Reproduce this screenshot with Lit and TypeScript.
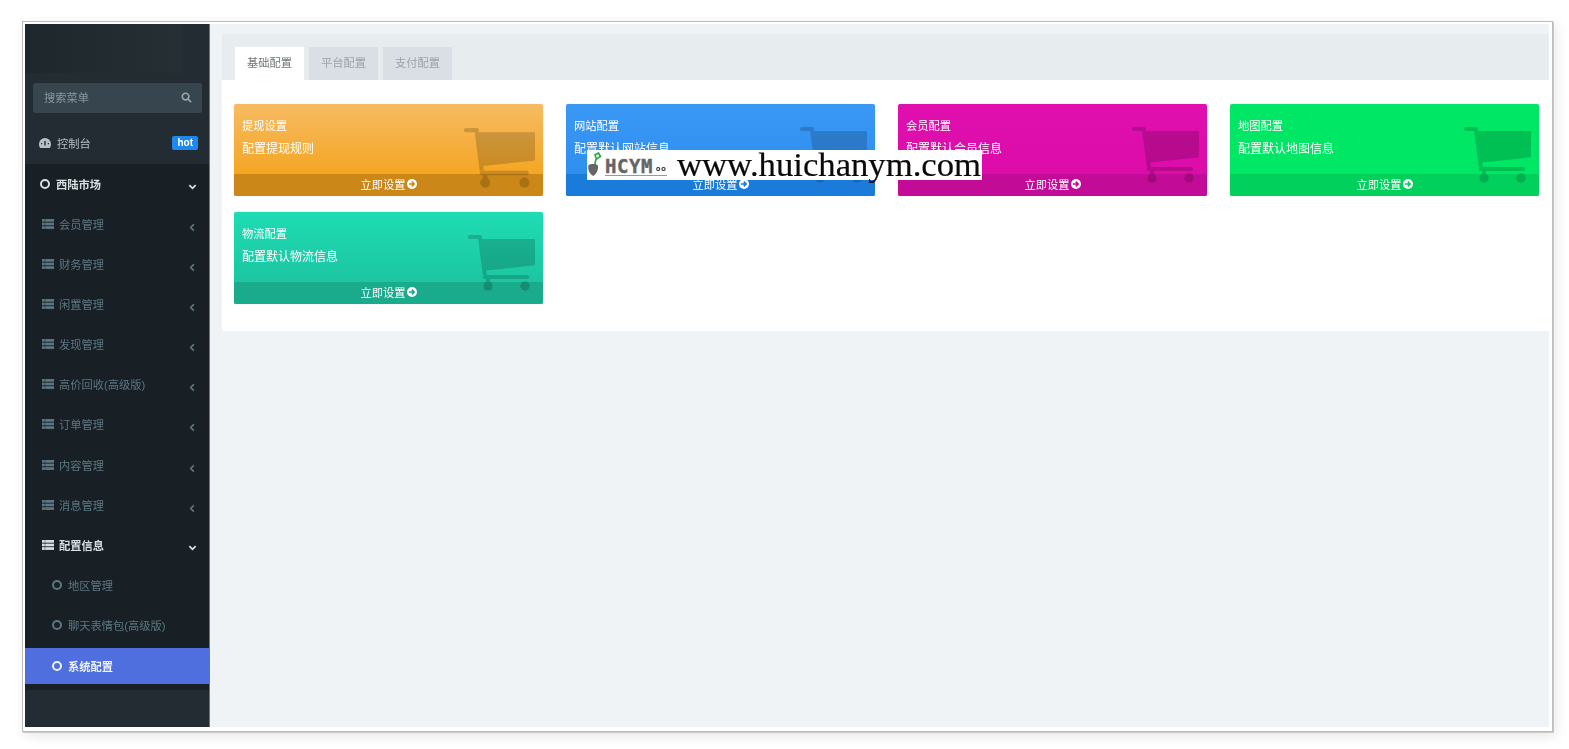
import { LitElement, css, html, svg } from "lit";
import { customElement } from "lit/decorators.js";

type Card = { title: string; desc: string; top: string; bottom: string; foot: string; big?: boolean };

const CARDS: Card[] = [
  { title: "提现设置", desc: "配置提现规则", top: "#f6bb62", bottom: "#f5a623", foot: "#cb8819", big: true },
  { title: "网站配置", desc: "配置默认网站信息", top: "#3a98f5", bottom: "#2f8fef", foot: "#1a7bdb" },
  { title: "会员配置", desc: "配置默认会员信息", top: "#df10ae", bottom: "#dc0ca9", foot: "#c20b96" },
  { title: "地图配置", desc: "配置默认地图信息", top: "#00e765", bottom: "#00e765", foot: "#02d05c" },
  { title: "物流配置", desc: "配置默认物流信息", top: "#1fdcb4", bottom: "#1bc6a1", foot: "#19ab8b" },
];

const MENU = ["会员管理", "财务管理", "闲置管理", "发现管理", "高价回收(高级版)", "订单管理", "内容管理", "消息管理"];

const listIcon = svg`<svg class="list" viewBox="0 0 12 10" width="12" height="10" fill="currentColor">
  <rect x="0" y="0" width="2.800" height="2.700"/><rect x="3.200" y="0" width="8.800" height="2.700"/>
  <rect x="0" y="3.600" width="2.800" height="2.700"/><rect x="3.200" y="3.600" width="8.800" height="2.700"/>
  <rect x="0" y="7.200" width="2.800" height="2.700"/><rect x="3.200" y="7.200" width="8.800" height="2.700"/>
</svg>`;

const chevronDown = svg`<svg class="chev" viewBox="0 0 10 10" width="9" height="9" fill="none" stroke="currentColor" stroke-width="2">
  <path d="M1.500 3.500 5 7l3.500-3.500"/></svg>`;

const chevronLeft = svg`<svg class="chev left" viewBox="0 0 10 10" width="9" height="9" fill="none" stroke="currentColor" stroke-width="1.800">
  <path d="M6.500 1.500 3 5l3.500 3.500"/></svg>`;

@customElement("app-root")
export class AppRoot extends LitElement {
  static styles = css`
    :host {
      display: block;
      height: 749px;
      background: #fff;
      font-family: "Liberation Sans", "Noto Sans CJK SC", sans-serif;
      overflow: hidden;
    }
    .frame {
      position: relative;
      box-sizing: border-box;
      width: 1531px;
      height: 711px;
      margin: 21px 0 0 22px;
      padding: 2px 3px 4px 2px;
      background: #fff;
      border: 1px solid #bdbdbd;
      box-shadow: 1px 1px 0 #c8c8c8, 3px 4px 12px rgba(0, 0, 0, 0.1);
    }
    .shot {
      display: flex;
      height: 100%;
      filter: blur(0.6px);
    }

    /* sidebar */
    .side {
      width: 185px;
      flex: none;
      display: flex;
      flex-direction: column;
      background: #222c32;
      border-right: 1px solid #70777b;
      box-sizing: border-box;
    }
    .logo {
      height: 49px;
      flex: none;
      background: linear-gradient(90deg, #1e272b, #262f34 85%, #222c32 86%);
    }
    .search {
      display: flex;
      align-items: center;
      justify-content: space-between;
      height: 30px;
      margin: 10px 7px 10px 8px;
      padding: 0 10px 2px 11px;
      box-sizing: border-box;
      background: #36454e;
      border-radius: 2px;
      color: #8a979f;
      font-size: 11.25px;
    }
    .search svg {
      color: #9aa5ab;
    }
    .dash {
      display: flex;
      align-items: center;
      height: 41px;
      padding: 0 11px 2px 14px;
      box-sizing: border-box;
      color: #b6bfc4;
      font-size: 11.25px;
    }
    .dash svg {
      margin-right: 6px;
    }
    .hot {
      margin-left: auto;
      padding: 0 5px;
      height: 14px;
      line-height: 13px;
      border-radius: 2px;
      background: #1e88ee;
      color: #fff;
      font-size: 10px;
      font-weight: bold;
    }
    .menu {
      flex: none;
      height: 526px;
      background: #182025;
      display: flex;
      flex-direction: column;
    }
    .row {
      display: flex;
      align-items: center;
      flex: none;
      height: 40.15px;
      padding: 0 12px 1px 17px;
      box-sizing: border-box;
      color: #5c7683;
      font-size: 11.25px;
    }
    .row .list {
      margin-right: 5px;
    }
    .row.on {
      color: #d9dee1;
      font-weight: bold;
    }
    .row.head {
      padding-left: 15px;
    }
    .row.sub {
      padding-left: 27px;
    }
    .row.active {
      height: 36.5px;
      margin-top: 2px;
      padding-bottom: 0;
      background: #4e6fdd;
      color: #eef1fb;
      font-weight: bold;
    }
    .ring {
      width: 10px;
      height: 10px;
      box-sizing: border-box;
      border: 2px solid currentColor;
      border-radius: 50%;
      margin-right: 6px;
      flex: none;
    }
    .chev {
      margin-left: auto;
    }
    .chev.left {
      margin-top: 7px;
    }
    .row.on .chev {
      margin-top: 5px;
    }

    /* main area */
    .main {
      flex: 1;
      min-width: 0;
      padding: 10px 0 0 12px;
      background: #eff3f6;
    }
    .tabs {
      display: flex;
      gap: 5px;
      height: 46px;
      padding: 13px 0 0 13px;
      box-sizing: border-box;
      background: #e7ecef;
    }
    .tab {
      width: 69px;
      height: 33px;
      line-height: 32px;
      text-align: center;
      font-size: 11.25px;
      color: #9aa3a9;
      background: #d9dfe5;
    }
    .tab.current {
      background: #fff;
      color: #6f777c;
    }
    .panel {
      display: grid;
      grid-template-columns: repeat(4, 1fr);
      gap: 16px 23px;
      padding: 24px 10px 27px 12px;
      background: #fff;
    }
    .card {
      position: relative;
      height: 92px;
      overflow: hidden;
      border-radius: 2px;
      color: #fff;
      box-shadow: 0 0 1px rgba(0, 0, 0, 0.25);
    }
    .card-body {
      height: 70px;
      padding: 15px 8px 0;
      box-sizing: border-box;
    }
    .card-title {
      font-size: 11.25px;
      line-height: 14px;
    }
    .card-desc {
      margin-top: 9px;
      font-size: 12px;
      line-height: 14px;
    }
    .cart {
      position: absolute;
      top: 22.5px;
      right: 8px;
    }
    .cart.big {
      top: 24px;
    }
    .card-foot {
      display: flex;
      align-items: center;
      justify-content: center;
      gap: 1px;
      height: 22px;
      padding-bottom: 2px;
      box-sizing: border-box;
      font-size: 11.25px;
    }

    /* watermark */
    .mark {
      position: absolute;
      left: 564px;
      top: 128px;
      display: flex;
      align-items: center;
      width: 395px;
      height: 30px;
      background: #fff;
      filter: blur(0.3px);
    }
    .shovel {
      flex: none;
      margin-right: 3px;
    }
    .mark-logo {
      display: flex;
      align-items: center;
      width: 62px;
      height: 17px;
      margin: 4px 10px 0 0;
      flex: none;
      border-bottom: 1px solid #999;
    }
    .mark-name {
      font: bold 19px "DejaVu Sans Mono", monospace;
      color: #666;
      letter-spacing: 0.6px;
      line-height: 17px;
      -webkit-text-stroke: 0.4px #666;
    }
    .mark-dots {
      margin: 5px 0 0 3px;
    }
    .mark-url {
      font-family: "Liberation Serif", serif;
      font-size: 34.7px;
      color: #0a0a0a;
      white-space: nowrap;
      line-height: 30px;
      -webkit-text-stroke: 0.2px #0a0a0a;
    }
  `;

  renderCard(c: Card) {
    return html`<div
      class="card"
      style="background: linear-gradient(180deg, ${c.top}, ${c.bottom} 76%)"
    >
      <div class="card-body">
        <div class="card-title">${c.title}</div>
        <div class="card-desc">${c.desc}</div>
      </div>
      <div class="card-foot" style="background: ${c.foot}">
        <span>立即设置</span>
        <svg viewBox="0 0 10 10" width="10" height="10">
          <circle cx="5" cy="5" r="5" fill="#fff" />
          <path d="M2 5h5M4.800 2.600 7.200 5 4.800 7.400" fill="none" stroke="${c.foot}" stroke-width="1.600" />
        </svg>
      </div>
      <svg
        class="cart ${c.big ? "big" : ""}"
        viewBox="0 0 67 56"
        width="${c.big ? 71 : 67}"
        height="${c.big ? 60 : 56}"
        preserveAspectRatio="none"
      >
        <!-- group opacity so the overlapping parts stay one flat shade -->
        <g fill="#000" opacity="0.17">
          <rect x="0" y="0" width="14" height="4" rx="2" />
          <path d="M10 3h3l1 1h52a1 1 0 0 1 1 1v24a1.500 1.500 0 0 1-1.500 1.500L18 35.500l.8 4.500h-4z" />
          <rect x="15" y="40" width="46" height="4" rx="1.500" />
          <rect x="18" y="43" width="4" height="5" />
          <circle cx="20" cy="51" r="4.700" />
          <circle cx="57" cy="51" r="4.700" />
        </g>
      </svg>
    </div>`;
  }

  render() {
    return html`<div class="frame">
      <div class="shot">
        <aside class="side">
          <div class="logo"></div>
          <div class="search">
            <span>搜索菜单</span>
            <svg viewBox="0 0 12 12" width="11" height="11" fill="none" stroke="currentColor" stroke-width="1.800">
              <circle cx="5" cy="5" r="3.600" />
              <path d="M7.800 7.800 11 11" />
            </svg>
          </div>
          <div class="dash">
            <svg viewBox="0 0 12 10" width="12" height="10" fill="currentColor">
              <path
                fill-rule="evenodd"
                d="M6 0a6 6 0 0 0-6 6c0 1.600.5 3 1.200 4h9.600c.7-1 1.200-2.400 1.200-4a6 6 0 0 0-6-6zM5.300 3h1.400v4.500H5.300zM2 5h1.200v1.200H2zM8.800 5H10v1.200H8.800z"
              />
            </svg>
            <span>控制台</span>
            <span class="hot">hot</span>
          </div>
          <nav class="menu">
            <div class="row on head"><span class="ring"></span>西陆市场${chevronDown}</div>
            ${MENU.map((m) => html`<div class="row">${listIcon}${m}${chevronLeft}</div>`)}
            <div class="row on">${listIcon}配置信息${chevronDown}</div>
            <div class="row sub"><span class="ring"></span>地区管理</div>
            <div class="row sub"><span class="ring"></span>聊天表情包(高级版)</div>
            <div class="row sub active"><span class="ring"></span>系统配置</div>
          </nav>
        </aside>
        <main class="main">
          <div class="tabs">
            <div class="tab current">基础配置</div>
            <div class="tab">平台配置</div>
            <div class="tab">支付配置</div>
          </div>
          <section class="panel">${CARDS.map((c) => this.renderCard(c))}</section>
        </main>
      </div>
      <div class="mark">
        <svg class="shovel" viewBox="0 0 15 26" width="15" height="26">
          <path d="M9.500 7 13.500 4.500 11.500 1 8 3z" fill="none" stroke="#2fa84f" stroke-width="1.700" />
          <path d="M9 7 7.500 14" stroke="#2fa84f" stroke-width="1.700" />
          <path d="M1.500 13c2.500-1.500 7.500-1.500 9.500.5.500 4-1 8-4.500 10.500C2.500 22 .5 18 1.500 13z" fill="#666" />
        </svg>
        <div class="mark-logo">
          <span class="mark-name">HCYM</span>
          <svg class="mark-dots" viewBox="0 0 10 4" width="10" height="4" fill="none" stroke="#444" stroke-width="1.200">
            <circle cx="2.200" cy="2" r="1.500" />
            <circle cx="7.500" cy="2" r="1.500" />
          </svg>
        </div>
        <span class="mark-url">www.huichanym.com</span>
      </div>
    </div>`;
  }
}
